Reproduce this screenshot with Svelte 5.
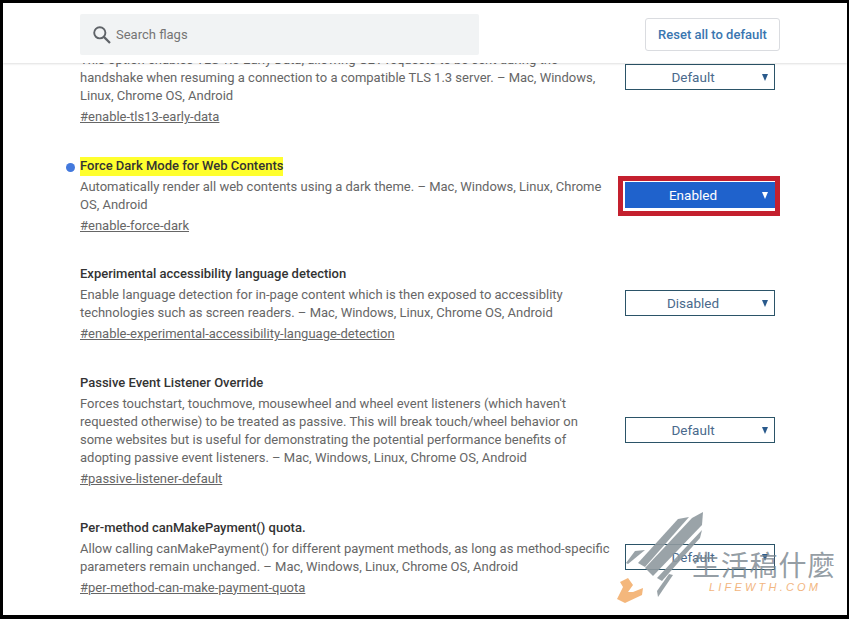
<script>
  const rows = [
    { title: '', lines: ['This option enables TLS 1.3 Early Data, allowing GET requests to be sent during the', 'handshake when resuming a connection to a compatible TLS 1.3 server. – Mac, Windows,', 'Linux, Chrome OS, Android'], link: '#enable-tls13-early-data', value: 'Default' },
    { title: 'Force Dark Mode for Web Contents', lines: ['Automatically render all web contents using a dark theme. – Mac, Windows, Linux, Chrome', 'OS, Android'], link: '#enable-force-dark', value: 'Enabled', on: true },
    { title: 'Experimental accessibility language detection', lines: ['Enable language detection for in-page content which is then exposed to accessiblity', 'technologies such as screen readers. – Mac, Windows, Linux, Chrome OS, Android'], link: '#enable-experimental-accessibility-language-detection', value: 'Disabled' },
    { title: 'Passive Event Listener Override', lines: ["Forces touchstart, touchmove, mousewheel and wheel event listeners (which haven't", 'requested otherwise) to be treated as passive. This will break touch/wheel behavior on', 'some websites but is useful for demonstrating the potential performance benefits of', 'adopting passive event listeners. – Mac, Windows, Linux, Chrome OS, Android'], link: '#passive-listener-default', value: 'Default' },
    { title: 'Per-method canMakePayment() quota.', lines: ['Allow calling canMakePayment() for different payment methods, as long as method-specific', 'parameters remain unchanged. – Mac, Windows, Linux, Chrome OS, Android'], link: '#per-method-can-make-payment-quota', value: 'Default' }
  ];
</script>

<div class="frame">
  <header class="top">
    <div class="search">
      <svg class="glass" width="20" height="20" viewBox="0 0 20 20" aria-hidden="true">
        <circle cx="7.8" cy="7.8" r="5.6" fill="none" stroke="#5f6368" stroke-width="1.9"/>
        <path d="M11.9 11.9 L18 18" stroke="#5f6368" stroke-width="2.2" fill="none"/>
      </svg>
      <span>Search flags</span>
    </div>
    <button class="reset">Reset all to default</button>
  </header>
  <main class="list">
    {#each rows as r}
      <section class="row">
        <div class="text">
          <h3 class:mark={r.on}>{#if r.on}<i class="dot"></i>{/if}<span>{r.title}</span></h3>
          {#each r.lines as l}<p>{l}</p>{/each}
          <a href="#top">{r.link}</a>
        </div>
        <div class="select" class:on={r.on}>
          <span>{r.value}</span><b></b>
          {#if r.on}<i class="callout"></i>{/if}
        </div>
      </section>
    {/each}
  </main>

  <div class="mark-wrap">
    <svg width="110" height="105" viewBox="0 0 110 105" aria-hidden="true">
      <g fill="#8f999f" fill-opacity=".9">
        <polygon points="79,12 68,14 28,58 35,62"/>
        <polygon points="93,7 82,13 35,63 43,71 92,20"/>
        <polygon points="92,25 47,73 52,76 90,33"/>
        <polygon points="63,70 59,69 47,86 48,92"/>
        <polygon points="35,45 25,46 16,58 18,59"/>
      </g>
      <path d="M18 73 L10 77 L13 82 L7 94 L15 98 L32 90 L33 83 L23 87 L18 87 L23 80Z" fill="#f4b77c"/>
    </svg>
    <div class="brand">
      <div class="cn">生活稿什麼</div>
      <div class="en">LIFEWTH.COM</div>
    </div>
  </div>
</div>

<style>
  :global(body) { margin: 0; background: #000; }
  .frame {
    width: 844px; height: 612px; margin: 3px 2px 4px 3px; background: #fff;
    overflow: hidden; position: relative;
    font-family: Roboto, "Liberation Sans", sans-serif;
  }
  .top {
    height: 60px; box-sizing: border-box; position: relative; z-index: 2; background: #fff;
    box-shadow: 0 1px 2px rgba(0,0,0,.13);
    display: flex; align-items: flex-start; padding: 11px 0 0 77px;
  }
  .search {
    width: 399px; height: 41px; background: #f1f3f4; border-radius: 2px;
    display: flex; align-items: center; padding-left: 12px; box-sizing: border-box;
    color: #757575; font-size: 13px;
  }
  .glass { margin-right: 4px; }
  .reset {
    margin: 4px 0 0 166px; width: 135px; height: 33px; background: #fff;
    border: 1px solid #dadce0; border-radius: 3px; color: #3a76b0;
    font: 500 13px Roboto, sans-serif; padding: 0;
  }
  .list { margin-top: -33px; padding-left: 77px; }
  .row {
    display: flex; align-items: center; width: 695px; min-height: 75px;
    margin-bottom: 30.7px;
  }
  .text { width: 545px; flex: none; }
  h3 {
    margin: 0; font: 500 13px/18px Roboto, sans-serif; color: #333; position: relative;
    height: 18px; margin-bottom: 3px;
  }
  h3.mark span { background: #ffff2e; display: inline-block; height: 19px; }
  .dot {
    position: absolute; left: -14px; top: 6px; width: 9px; height: 9px;
    border-radius: 50%; background: #4379dd;
  }
  p { margin: 0; font-size: 13px; line-height: 18px; color: #666; white-space: nowrap; }
  a {
    display: block; margin-top: 3px; font-size: 13px; line-height: 18px;
    color: #666; text-decoration: underline;
  }
  .select {
    width: 150px; height: 26px; box-sizing: border-box; border: 1px solid #2b5468;
    position: relative; display: flex; align-items: center; justify-content: center;
    font-size: 13.5px; color: #4a6a8c; padding-right: 14px; background: transparent;
    margin-bottom: 2px;
  }
  .select b {
    position: absolute; right: 6px; top: 9px; width: 0; height: 0;
    border-left: 3.5px solid transparent; border-right: 3.5px solid transparent;
    border-top: 7px solid #2a5a8c;
  }
  .select.on { background: #1f62cc; border-color: #1f62cc; color: #fff; }
  .select.on b { border-top-color: #fff; }
  .callout {
    position: absolute; left: -8px; top: -7px; right: -6px; bottom: -9px;
    border: 5px solid #c4202e; box-sizing: border-box;
  }
  .mark-wrap { position: absolute; left: 607px; top: 502px; width: 237px; height: 110px; pointer-events: none; }
  .mark-wrap svg { position: absolute; left: 0; top: 0; }
  .brand { position: absolute; left: 82px; top: 42px; }
  .cn { font: 400 28px/34px "Noto Sans CJK TC", sans-serif; color: rgba(120,132,140,.8); letter-spacing: .8px; white-space: nowrap; }
  .en { font: italic 400 11px/13px "Liberation Sans", sans-serif; color: #f2b681; letter-spacing: 3.2px; margin: 0 0 0 17px; white-space: nowrap; }
</style>
